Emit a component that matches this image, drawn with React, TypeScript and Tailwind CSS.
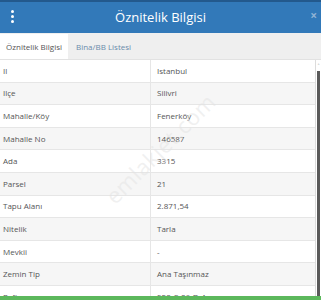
const rows: [string, string][] = [
    ["Il", "Istanbul"],
    ["Ilçe", "Silivri"],
    ["Mahalle/Köy", "Fenerköy"],
    ["Mahalle No", "146587"],
    ["Ada", "3315"],
    ["Parsel", "21"],
    ["Tapu Alanı", "2.871,54"],
    ["Nitelik", "Tarla"],
    ["Mevkii", "-"],
    ["Zemin Tip", "Ana Taşınmaz"],
    ["Pafta", "520-C-06-D-4"],
]

export default function App() {
    return (
        <div
            className="relative w-[321px] h-[300px] overflow-hidden bg-white flex flex-col"
            style={{ fontFamily: "'Open Sans', 'Noto Sans', sans-serif" }}
        >
            <div className="relative h-[33px] shrink-0 bg-[#3279b9] border-t-2 border-[#23598d] flex items-center justify-center">
                <div className="absolute left-[11px] top-[8px] flex flex-col gap-[2px]">
                    <span className="w-[3px] h-[3px] rounded-full bg-white" />
                    <span className="w-[3px] h-[3px] rounded-full bg-white" />
                    <span className="w-[3px] h-[3px] rounded-full bg-white" />
                </div>
                <span className="text-white text-[13px] leading-none pb-[1px]">Öznitelik Bilgisi</span>
                <span className="absolute right-[4px] top-[8px] text-[#8fb2d4] text-[12px] leading-none font-bold">×</span>
            </div>

            <div className="h-[27px] shrink-0 bg-[#efefef] flex items-end border-b border-[#e2e2e2]">
                <div className="h-[25px] w-[68px] bg-white flex items-center justify-center text-[8px] text-[#555]">
                    Öznitelik Bilgisi
                </div>
                <div className="h-[25px] px-[8px] flex items-center text-[8px] text-[#6a8bab]">
                    Bina/BB Listesi
                </div>
            </div>

            <div className="flex-1 min-h-0 flex overflow-hidden">
                <div className="w-[316px] border-r border-[#dcdcdc] shrink-0">
                    {rows.map(([k, v], i) => (
                        <div
                            key={k}
                            className={`h-[22.6px] flex border-b border-[#e6e6e6] text-[8px] text-[#555] ${i % 2 === 1 ? "bg-[#f6f6f6]" : "bg-white"}`}
                        >
                            <div className="w-[151px] border-r border-[#e6e6e6] pl-[3px] flex items-center">{k}</div>
                            <div className="flex-1 pl-[6px] flex items-center">{v}</div>
                        </div>
                    ))}
                </div>
                <div className="flex-1 flex flex-col items-center pt-[3px]">
                    <span className="text-[6px] leading-none text-[#777]">˄</span>
                    <div className="w-[3px] flex-1 mt-[2px] bg-[#5a5a5a]" />
                </div>
            </div>

            <div className="h-[4px] shrink-0 bg-[#5cb85c]" />

            <div className="pointer-events-none absolute left-[88px] top-[132px] -rotate-45 text-[22px] text-[#e2e2e2]/50 tracking-wide">
                emlakjet.com
            </div>
        </div>
    )
}
